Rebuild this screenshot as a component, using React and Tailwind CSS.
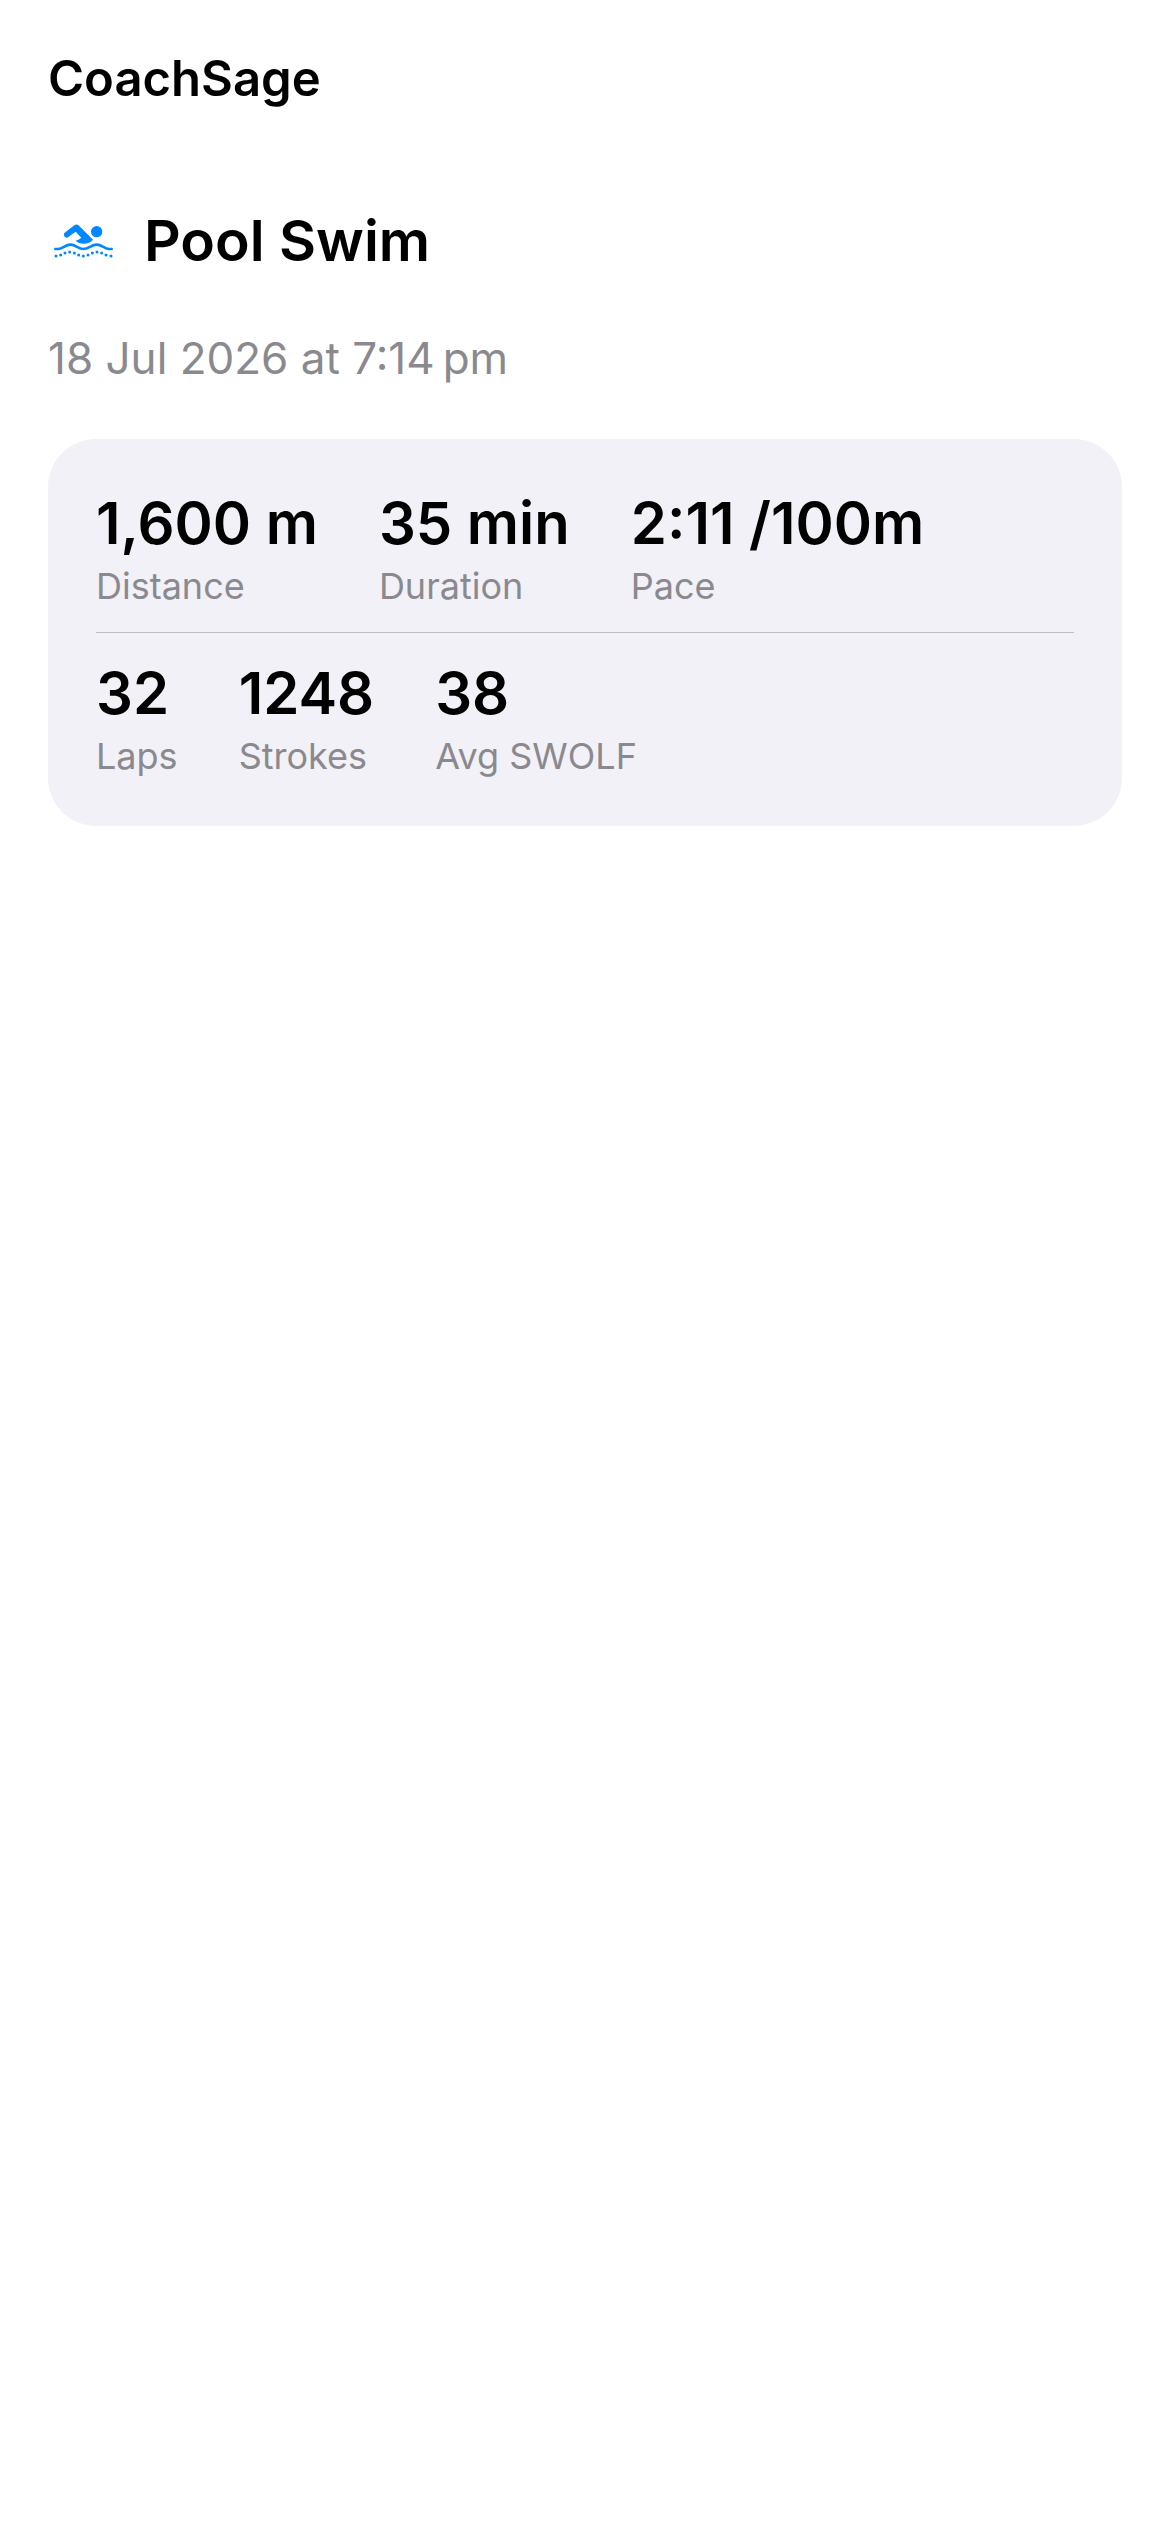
function SwimIcon() {
  return (
    <svg
      viewBox="42 41 177 102"
      className="h-[34px] w-[59px] text-[#0088ff]"
      fill="currentColor"
      aria-hidden="true"
    >
      <circle cx="170" cy="64" r="17" />
      <path d="M74 67 L103 45 Q110 40 117 46 L159 88 Q149 100 130 100 Q116 100 107 91 Q118 88 124 82 L107 64 L84 81 Q78 84 73 78 Q70 71 74 67 Z" />
      <path
        d="M46 116 H54 C68 116 76 103 91 103 C108 103 114 116 130 116 C147 116 153 103 170 103 C186 103 193 116 207 116 H215"
        fill="none"
        stroke="currentColor"
        strokeWidth="8"
        strokeLinecap="round"
      />
      <g>
        <circle cx="48" cy="137" r="4.5" />
        <circle cx="62" cy="134" r="4.5" />
        <circle cx="75" cy="128" r="4.5" />
        <circle cx="89" cy="125" r="4.5" />
        <circle cx="103" cy="128" r="4.5" />
        <circle cx="116" cy="134" r="4.5" />
        <circle cx="130" cy="137" r="4.5" />
        <circle cx="144" cy="134" r="4.5" />
        <circle cx="157" cy="128" r="4.5" />
        <circle cx="171" cy="125" r="4.5" />
        <circle cx="185" cy="128" r="4.5" />
        <circle cx="198" cy="134" r="4.5" />
        <circle cx="213" cy="137" r="4.5" />
      </g>
    </svg>
  );
}

function Stat({ value, label }) {
  return (
    <div className="flex flex-col gap-[6px]">
      <dt className="order-last text-[36px] leading-[43px] whitespace-nowrap text-[#8a8a8e]">{label}</dt>
      <dd className="text-[58px] leading-[72px] font-semibold whitespace-nowrap text-black">{value}</dd>
    </div>
  );
}

export default function App() {
  return (
    <main className="min-h-screen bg-white p-12 font-['Inter',sans-serif] text-black">
      <header>
        <p className="text-[49px] leading-[61px] font-semibold">CoachSage</p>
      </header>

      <article className="mt-24 flex flex-col gap-[54px]">
        <div className="flex items-center gap-[31px] pl-[6px]">
          <SwimIcon />
          <h1 className="text-[57px] leading-[72px] font-semibold">Pool Swim</h1>
        </div>

        <p className="text-[44px] leading-[54px] text-[#8a8a8e]">18 Jul 2026 at 7:14{"\u2009"}pm</p>

        <section className="rounded-[48px] bg-[#f2f1f7] p-12">
          <dl className="flex gap-[61px]">
            <Stat value="1,600 m" label="Distance" />
            <Stat value="35 min" label="Duration" />
            <Stat value="2:11 /100m" label="Pace" />
          </dl>
          <hr className="my-6 border-t border-[#bdbdc2]" />
          <dl className="flex gap-[61px]">
            <Stat value="32" label="Laps" />
            <Stat value="1248" label="Strokes" />
            <Stat value="38" label="Avg SWOLF" />
          </dl>
        </section>
      </article>
    </main>
  );
}
